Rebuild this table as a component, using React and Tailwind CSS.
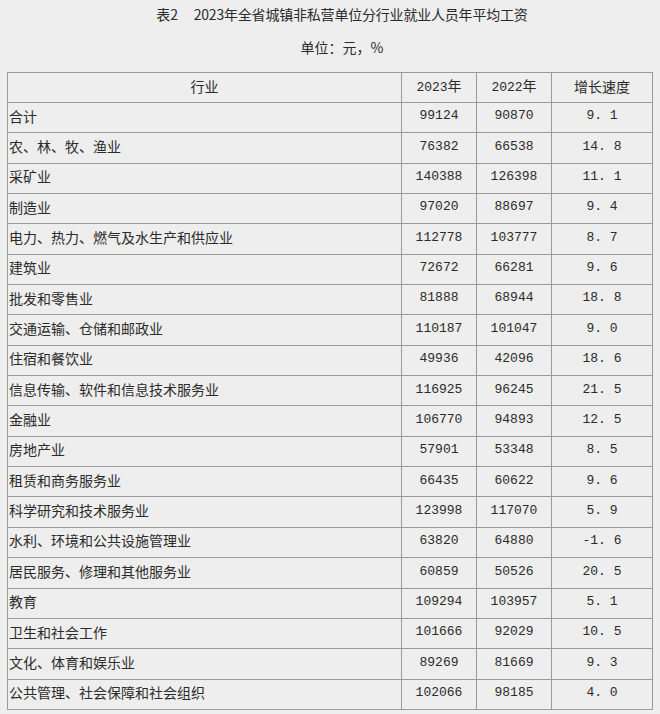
import React from "react";

const rows = [
  ["合计", "99124", "90870", "9.1"],
  ["农、林、牧、渔业", "76382", "66538", "14.8"],
  ["采矿业", "140388", "126398", "11.1"],
  ["制造业", "97020", "88697", "9.4"],
  ["电力、热力、燃气及水生产和供应业", "112778", "103777", "8.7"],
  ["建筑业", "72672", "66281", "9.6"],
  ["批发和零售业", "81888", "68944", "18.8"],
  ["交通运输、仓储和邮政业", "110187", "101047", "9.0"],
  ["住宿和餐饮业", "49936", "42096", "18.6"],
  ["信息传输、软件和信息技术服务业", "116925", "96245", "21.5"],
  ["金融业", "106770", "94893", "12.5"],
  ["房地产业", "57901", "53348", "8.5"],
  ["租赁和商务服务业", "66435", "60622", "9.6"],
  ["科学研究和技术服务业", "123998", "117070", "5.9"],
  ["水利、环境和公共设施管理业", "63820", "64880", "-1.6"],
  ["居民服务、修理和其他服务业", "60859", "50526", "20.5"],
  ["教育", "109294", "103957", "5.1"],
  ["卫生和社会工作", "101666", "92029", "10.5"],
  ["文化、体育和娱乐业", "89269", "81669", "9.3"],
  ["公共管理、社会保障和社会组织", "102066", "98185", "4.0"],
];

const cjk = "font-['Noto_Sans_CJK_SC','Noto_Sans',sans-serif]";
const mono = "font-['Liberation_Mono','Noto_Sans_CJK_SC',monospace]";

export default function App() {
  return (
    <div className={`w-[660px] h-[714px] bg-[#eeeeee] text-[#2b2b2b] ${cjk} overflow-hidden`}>
      <div className="flex flex-col items-center pl-[24px]">
        <div className="h-[28px] leading-[28px] text-[14px] tracking-[-0.2px]">
          表2<span className="inline-block w-[16px]"></span>2023年全省城镇非私营单位分行业就业人员年平均工资
        </div>
        <div className="mt-[5px] h-[28px] leading-[28px] text-[14px]">单位：元，%</div>
      </div>
      <table className="mt-[11px] ml-[7px] w-[645px] table-fixed border-collapse border border-[#9a9a9a] text-[14px]">
        <colgroup>
          <col className="w-[394px]" />
          <col className="w-[75px]" />
          <col className="w-[75px]" />
          <col className="w-[101px]" />
        </colgroup>
        <thead>
          <tr className="h-[30px]">
            <th className="border border-[#9a9a9a] font-normal text-center p-0 pb-[3px]">行业</th>
            <th className="border border-[#9a9a9a] font-normal text-center p-0 pb-[3px]">
              <span className={mono + " text-[13px]"}>2023</span>年
            </th>
            <th className="border border-[#9a9a9a] font-normal text-center p-0 pb-[3px]">
              <span className={mono + " text-[13px]"}>2022</span>年
            </th>
            <th className="border border-[#9a9a9a] font-normal text-center p-0 pb-[3px]">增长速度</th>
          </tr>
        </thead>
        <tbody>
          {rows.map((r) => (
            <tr key={r[0]} className="h-[30.35px]">
              <td className="border border-[#9a9a9a] text-left p-0 pl-px pb-[3px] whitespace-nowrap">{r[0]}</td>
              <td className={`border border-[#9a9a9a] text-center p-0 pb-[3px] ${mono} text-[13px]`}>{r[1]}</td>
              <td className={`border border-[#9a9a9a] text-center p-0 pb-[3px] ${mono} text-[13px]`}>{r[2]}</td>
              <td className={`border border-[#9a9a9a] text-center p-0 pb-[3px] ${mono} text-[13px] whitespace-pre`}>
                {r[3].replace(".", ". ")}
              </td>
            </tr>
          ))}
        </tbody>
      </table>
    </div>
  );
}
